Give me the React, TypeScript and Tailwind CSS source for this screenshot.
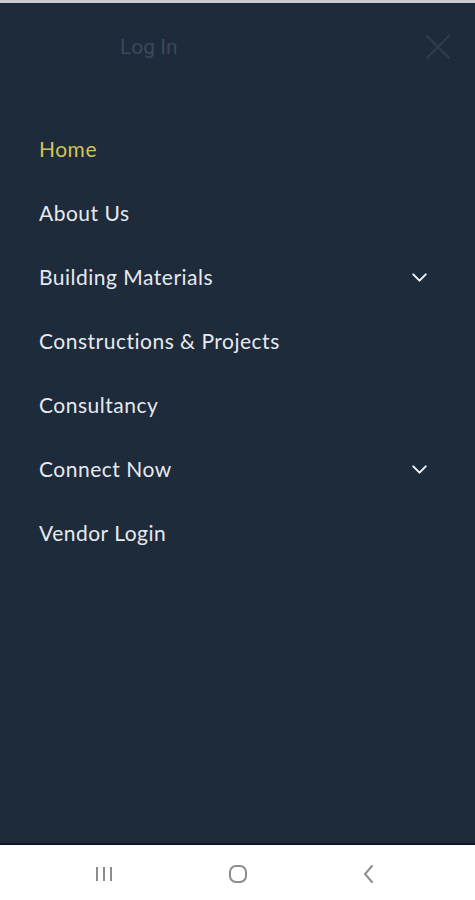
import { ChevronDown } from "lucide-react";

const items = [
  { label: "Home", active: true },
  { label: "About Us" },
  { label: "Building Materials", dropdown: true },
  { label: "Constructions & Projects" },
  { label: "Consultancy" },
  { label: "Connect Now", dropdown: true },
  { label: "Vendor Login" },
];

const App = () => {
  return (
    <div className="w-[475px] h-[900px] flex flex-col bg-white overflow-hidden">
      <div className="h-[3px] bg-[#c9ccd2]" />
      <div className="flex-1 bg-[#1e2b3b] flex flex-col">
        {/* header */}
        <div className="h-[88px] flex items-center justify-between pl-[120px] pr-[24px] pt-[2px]">
          <span className="text-[21px] text-[#3a495c] font-['Roboto',sans-serif]">Log In</span>
          <svg width="26" height="26" viewBox="0 0 26 26" className="mb-[2px]">
            <path d="M2 2 L24 24 M24 2 L2 24" stroke="#313d48" strokeWidth="2.2" strokeLinecap="round" />
          </svg>
        </div>

        <ul className="flex flex-col pt-[26px] pl-[39px] pr-[43px]">
          {items.map((item) => (
            <li key={item.label} className="h-[64px] flex items-center justify-between">
              <span
                className={`text-[21px] font-['Lato',sans-serif] tracking-[0.5px] ${
                  item.active ? "text-[#d4c15a]" : "text-[#e6e9ee]"
                }`}
              >
                {item.label}
              </span>
              {item.dropdown && <ChevronDown className="w-[25px] h-[25px] text-[#eef0f3]" strokeWidth={2} />}
            </li>
          ))}
        </ul>
      </div>
      <div className="h-[2px] bg-[#0b1420]" />

      {/* android nav */}
      <div className="h-[55px] bg-white flex items-center justify-between pl-[94px] pr-[99px] pt-[2px]">
        <svg width="20" height="16" viewBox="0 0 20 16">
          <path d="M3 1 V15 M10 1 V15 M17 1 V15" stroke="#8c8c8c" strokeWidth="2" />
        </svg>
        <svg width="20" height="20" viewBox="0 0 20 20">
          <rect x="2" y="2" width="16" height="16" rx="6" fill="none" stroke="#8c8c8c" strokeWidth="2" />
        </svg>
        <svg width="14" height="20" viewBox="0 0 14 20">
          <path d="M10 2 L3 10 L10 18" fill="none" stroke="#8c8c8c" strokeWidth="2" strokeLinecap="round" />
        </svg>
      </div>
    </div>
  );
};

export default App;
